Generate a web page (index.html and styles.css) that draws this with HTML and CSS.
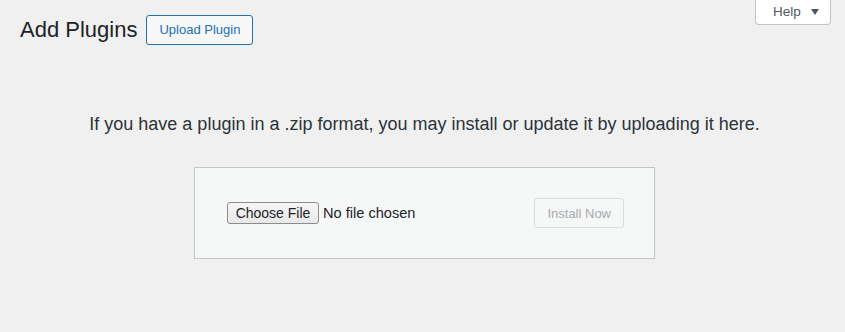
FILE: index.html
```html
<!DOCTYPE html>
<html lang="en">
<head>
<meta charset="utf-8">
<title>Add Plugins</title>
<link rel="stylesheet" href="styles.css">
</head>
<body>
<div class="screen-meta-links">
  <button class="help-tab" type="button">Help <span class="help-arrow"></span></button>
</div>
<div class="wrap">
  <div class="page-header">
    <h1 class="page-title">Add Plugins</h1>
    <a class="page-title-action" href="#">Upload Plugin</a>
  </div>
  <p class="install-help">If you have a plugin in a .zip format, you may install or update it by uploading it here.</p>
  <form class="upload-form">
    <input class="file-input" type="file" name="pluginzip">
    <button class="install-btn" type="button" disabled>Install Now</button>
  </form>
</div>
</body>
</html>
```

FILE: styles.css
```css
html, body {
  margin: 0;
  padding: 0;
  background: #f0f0f1;
}
body {
  font-family: "Liberation Sans", Arial, sans-serif;
  color: #3c434a;
  position: relative;
  min-height: 332px;
}
.screen-meta-links {
  position: absolute;
  top: 0;
  right: 14px;
}
.help-tab {
  display: flex;
  align-items: center;
  box-sizing: border-box;
  width: 76px;
  height: 25px;
  padding: 0 0 1px 17px;
  background: #fff;
  border: 1px solid #c3c4c7;
  border-top: none;
  border-radius: 0 0 4px 4px;
  color: #50575e;
  font-family: "Liberation Sans", Arial, sans-serif;
  font-size: 13.5px;
  cursor: pointer;
}
.help-arrow {
  display: inline-block;
  margin-left: 10px;
  width: 0;
  height: 0;
  border-left: 4px solid transparent;
  border-right: 4px solid transparent;
  border-top: 6px solid #50575e;
}
.wrap {
  padding: 15px 16px 0 20px;
}
.page-header {
  display: flex;
  align-items: center;
  gap: 9px;
}
.page-title {
  margin: 0;
  font-size: 22px;
  font-weight: 400;
  line-height: 30px;
  color: #1d2327;
}
.page-title-action {
  box-sizing: border-box;
  height: 30px;
  line-height: 28px;
  padding: 0 12px;
  border: 1px solid #2271b1;
  border-radius: 3px;
  background: #f6f7f7;
  color: #2271b1;
  font-size: 13px;
  text-decoration: none;
}
.install-help {
  margin: 67px 0 31px;
  font-size: 18px;
  line-height: 24px;
  text-align: center;
  color: #2c3338;
}
.upload-form {
  box-sizing: border-box;
  width: 461px;
  margin: 0 auto;
  padding: 30px;
  display: flex;
  justify-content: space-between;
  align-items: center;
  background: #f6f7f7;
  border: 1px solid #c3c4c7;
}
.file-input {
  margin-left: 2px;
  font-family: "Liberation Sans", Arial, sans-serif;
  font-size: 14.6px;
  color: #1d2327;
}
.file-input::file-selector-button {
  box-sizing: border-box;
  width: 92px;
  height: 22px;
  margin-right: 4px;
  padding: 0;
  font-family: "Liberation Sans", Arial, sans-serif;
  font-size: 14px;
  color: #1d2327;
  background: linear-gradient(#f6f6f6, #e8e8e8);
  border: 1px solid #8c8c8c;
  border-radius: 3px;
}
.install-btn {
  box-sizing: border-box;
  height: 30px;
  padding: 0 12px;
  font-family: "Liberation Sans", Arial, sans-serif;
  font-size: 13px;
  color: #a7aaad;
  background: #f6f7f7;
  border: 1px solid #dcdcde;
  border-radius: 3px;
}
```
